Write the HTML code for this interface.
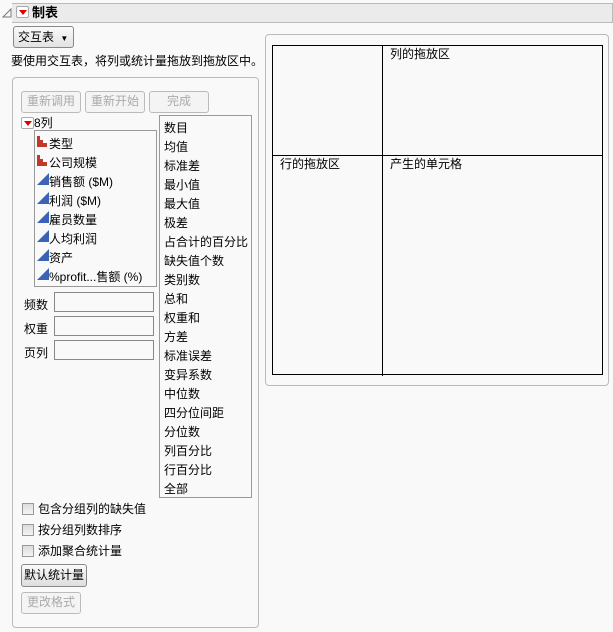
<!DOCTYPE html>
<html><head><meta charset="utf-8"><style>
*{box-sizing:border-box;margin:0;padding:0}
body{width:613px;height:632px;background:#f9f9f9;font-family:"Liberation Sans","Noto Sans CJK SC",sans-serif;font-size:12px;color:#000;position:relative;overflow:hidden}
.a{position:absolute;white-space:nowrap}
.btn{position:absolute;border:1px solid #bbb;border-radius:3px;background:#f4f4f4;color:#aaa;text-align:center;line-height:19px}
.box{position:absolute;border:1px solid #999;background:#f9f9f9}
.inp{position:absolute;border:1px solid #888;background:#f9f9f9}
.cb{position:absolute;width:12px;height:12px;border:1px solid #999;background:linear-gradient(#ddd,#f4f4f4)}
.red{position:absolute;width:13px;height:12px;border:1px solid #aaa;border-radius:2px;background:#fff}
.red:after{content:"";position:absolute;left:2px;top:3px;border-left:4px solid transparent;border-right:4px solid transparent;border-top:5px solid #d00}
</style></head><body>
<div class="a" style="top:3px;height:20px;background:#ebebeb;border:1px solid #bbb;border-left:none;left:12px;width:601px"></div>
<svg class="a" style="left:2px;top:8px" width="10" height="10"><path d="M1 9 L9 1 L9 9 Z" fill="none" stroke="#777"/></svg>
<div class="red" style="left:16px;top:6px"></div>
<div class="a" style="left:32px;top:4px;font-size:13px;font-weight:bold;line-height:18px">制表</div>
<div class="a" style="left:13px;top:26px;width:61px;height:22px;border:1px solid #888;border-radius:3px;background:linear-gradient(#fafafa,#e2e2e2);line-height:20px;padding-left:4px">交互表 <span style="font-size:8px;margin-left:3px">▼</span></div>
<div class="a" style="left:11px;top:53px;line-height:17px">要使用交互表，将列或统计量拖放到拖放区中。</div>

<div class="a" style="left:12px;top:77px;width:247px;height:551px;border:1px solid #bbb;border-radius:4px"></div>
<div class="btn" style="left:21px;top:91px;width:60px;height:22px">重新调用</div>
<div class="btn" style="left:85px;top:91px;width:60px;height:22px">重新开始</div>
<div class="btn" style="left:149px;top:91px;width:60px;height:22px">完成</div>
<div class="red" style="left:21px;top:117px"></div>
<div class="a" style="left:34px;top:115px;line-height:17px">8列</div>
<div class="box" style="left:34px;top:130px;width:123px;height:157px"></div>
<svg class="a" style="left:37px;top:136px" width="13" height="150">
<g fill="#c0392b"><rect x="0" y="0" width="3" height="11"/><rect x="3" y="4" width="3" height="7"/><rect x="6" y="7" width="4" height="4"/>
<rect x="0" y="19" width="3" height="11"/><rect x="3" y="23" width="3" height="7"/><rect x="6" y="26" width="4" height="4"/></g>
<g fill="#3a63b5"><path d="M0 49 L12 37 L12 49Z"/><path d="M0 68 L12 56 L12 68Z"/><path d="M0 87 L12 75 L12 87Z"/><path d="M0 106 L12 94 L12 106Z"/><path d="M0 125 L12 113 L12 125Z"/><path d="M0 144 L12 132 L12 144Z"/></g>
</svg>
<div class="a" style="left:49px;top:135px;line-height:19px">类型<br>公司规模<br>销售额 ($M)<br>利润 ($M)<br>雇员数量<br>人均利润<br>资产<br>%profit...售额 (%)</div>
<div class="a" style="left:24px;top:293px;line-height:24px">频数<br>权重<br>页列</div>
<div class="inp" style="left:54px;top:292px;width:100px;height:20px"></div>
<div class="inp" style="left:54px;top:316px;width:100px;height:20px"></div>
<div class="inp" style="left:54px;top:340px;width:100px;height:20px"></div>
<div class="box" style="left:159px;top:115px;width:93px;height:383px"></div>
<div class="a" style="left:164px;top:119px;line-height:19px">数目<br>均值<br>标准差<br>最小值<br>最大值<br>极差<br>占合计的百分比<br>缺失值个数<br>类别数<br>总和<br>权重和<br>方差<br>标准误差<br>变异系数<br>中位数<br>四分位间距<br>分位数<br>列百分比<br>行百分比<br>全部</div>
<div class="cb" style="left:22px;top:503px"></div><div class="a" style="left:38px;top:500px;line-height:18px">包含分组列的缺失值</div>
<div class="cb" style="left:22px;top:524px"></div><div class="a" style="left:38px;top:521px;line-height:18px">按分组列数排序</div>
<div class="cb" style="left:22px;top:545px"></div><div class="a" style="left:38px;top:542px;line-height:18px">添加聚合统计量</div>
<div class="a" style="left:21px;top:564px;width:66px;height:23px;border:1px solid #888;border-radius:3px;background:linear-gradient(#fafafa,#dedede);text-align:center;line-height:21px">默认统计量</div>
<div class="btn" style="left:21px;top:592px;width:60px;height:22px">更改格式</div>

<div class="a" style="left:265px;top:34px;width:344px;height:352px;border:1px solid #bbb;border-radius:4px"></div>
<div class="a" style="left:272px;top:45px;width:331px;height:330px;border:1px solid #000"></div>
<div class="a" style="left:382px;top:45px;width:1px;height:331px;background:#000"></div>
<div class="a" style="left:272px;top:155px;width:331px;height:1px;background:#000"></div>
<div class="a" style="left:390px;top:46px;line-height:17px">列的拖放区</div>
<div class="a" style="left:280px;top:156px;line-height:17px">行的拖放区</div>
<div class="a" style="left:390px;top:156px;line-height:17px">产生的单元格</div>
</body></html>
